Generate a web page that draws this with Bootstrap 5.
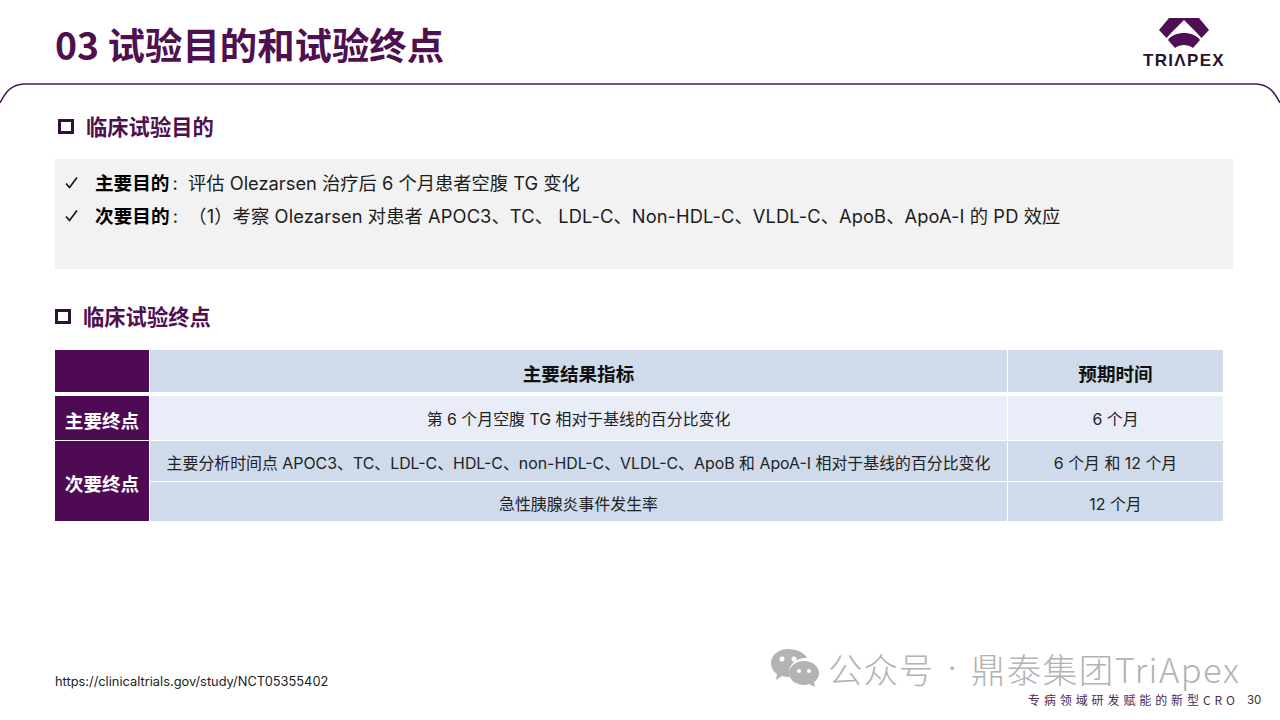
<!doctype html>
<html lang="zh"><head><meta charset="utf-8"><title>试验目的和试验终点</title>
<link href="https://cdn.jsdelivr.net/npm/bootstrap@5.3.0/dist/css/bootstrap.min.css" rel="stylesheet">
<style>
html,body{margin:0;height:720px;overflow:hidden;background:#fff}
body{font-family:Inter,"Noto Sans CJK SC",sans-serif;color:#1c1c1c}
.slide{position:relative;width:1280px;height:720px}
.top-head{height:83px;padding:0 55px 0 55px}
.page-title{font-size:37.4px;font-weight:700;color:#4f1050;line-height:1;margin:0;padding-top:26px;height:83px;font-family:"Noto Sans CJK SC",sans-serif;letter-spacing:0}
.logo-box{width:84px;margin-right:-1px;padding-top:18px;text-align:center}
.logo-text{font-family:"Liberation Sans",sans-serif;font-weight:700;font-size:17px;letter-spacing:1.3px;color:#2a1230;line-height:1;margin-top:3px;white-space:nowrap}
.curve{display:block;width:1280px;height:21px}
.sec-head{font-size:21.3px;font-weight:700;color:#4f1050;line-height:24px;margin:0;font-family:"Noto Sans CJK SC",sans-serif}
.sq{width:16px;height:15px;border:3px solid #2f1238;flex:none}
.sec-one{padding:10px 0 0 58px;gap:12px}
.goal-box{margin:21px 47px 0 55px;height:110px;background:#f2f2f2;padding:7px 0 0 10px;font-size:18.3px;line-height:32px;white-space:nowrap}
.goal-box b{font-weight:700;font-size:18.6px;color:#000;font-family:"Noto Sans CJK SC",sans-serif}
.colon{display:inline-block;width:18.6px;padding-left:3px}
.wide-line{letter-spacing:.09px}
.tick{width:30px;flex:none;display:flex;align-items:center}
.sec-two{padding:35px 0 0 55px;gap:12px}
.grid-tb{margin:22px 0 0 55px;display:grid;grid-template-columns:94px 857px 215px;grid-template-rows:42px 48px 41px 40px;column-gap:1px;width:1168px;font-size:15.9px;text-align:center;color:#222}
.cl{display:flex;align-items:center;justify-content:center;background:#cfdbea;white-space:nowrap;padding-top:4px}
.cl.hd{font-size:18.6px;font-weight:700;color:#111;font-family:"Noto Sans CJK SC",sans-serif}
.cl.pale{background:#e8edf7}
.cl.pu{background:#4e0a52;color:#fff;font-weight:700;font-size:18.6px;font-family:"Noto Sans CJK SC",sans-serif}
.r2{margin-top:4px}
.r3{margin-top:1px;padding-top:6px}
.sp{grid-row:span 2;margin-top:1px}
.src{position:absolute;left:55px;top:673px;font-size:12.85px;line-height:18px;color:#222}
.wm{position:absolute;left:771px;top:647px;color:#b3b3b3;font-size:34.5px;font-weight:300;line-height:42px;gap:13px;white-space:nowrap;letter-spacing:.9px;font-family:"Noto Sans CJK SC",sans-serif}
.wm-icon{margin-right:-4px}
.wm-dot{font-family:Inter,sans-serif}
.wm-name{letter-spacing:1.5px}
.tag{position:absolute;left:1028px;top:692px;font-size:12px;line-height:16px;letter-spacing:3.9px;color:#4a2a50;white-space:nowrap;font-family:"Noto Sans CJK SC",sans-serif}
.pg{position:absolute;left:1247px;top:692px;font-size:11.5px;line-height:16px;color:#333}
</style></head>
<body><div class="slide">
<div class="top-head d-flex justify-content-between">
  <h1 class="page-title">03 试验目的和试验终点</h1>
  <div class="logo-box">
    <svg width="50" height="31" viewBox="0 0 50 31" class="d-block mx-auto"><path fill="#4e0f55" d="M10 0H40L50 12 42.500 20 37 14 25 2 13 14 7.500 20 0 12Z"/><path fill="#4e0f55" d="M9 22C15 12.700 35 12.700 41 22L34 30C29 26 21 26 16 30Z"/></svg>
    <div class="logo-text">TRIΛPEX</div>
  </div>
</div>
<svg class="curve" viewBox="0 0 1280 21"><path d="M0 20C6 8 12 1.500 24 1H1256C1268 1.500 1274 8 1280 20" fill="none" stroke="#4e1a58" stroke-width="1.500"/></svg>
<div class="d-flex align-items-center sec-one"><span class="sq"></span><h2 class="sec-head">临床试验目的</h2></div>
<div class="goal-box">
  <div class="d-flex"><span class="tick"><svg width="13" height="13" viewBox="0 0 13 13"><path d="M1 7.500 4.500 11.500 12 1.500" fill="none" stroke="#111" stroke-width="1.600"/></svg></span><span><b>主要目的</b><span class="colon">:</span>评估 Olezarsen 治疗后 6 个月患者空腹 TG 变化</span></div>
  <div class="d-flex"><span class="tick"><svg width="13" height="13" viewBox="0 0 13 13"><path d="M1 7.500 4.500 11.500 12 1.500" fill="none" stroke="#111" stroke-width="1.600"/></svg></span><span class="wide-line"><b>次要目的</b><span class="colon">:</span>（1）考察 Olezarsen 对患者 APOC3、TC、 LDL-C、Non-HDL-C、VLDL-C、ApoB、ApoA-I 的 PD 效应</span></div>
</div>
<div class="d-flex align-items-center sec-two"><span class="sq"></span><h2 class="sec-head">临床试验终点</h2></div>
<div class="grid-tb">
  <div class="cl pu"></div><div class="cl hd">主要结果指标</div><div class="cl hd">预期时间</div>
  <div class="cl pu r2">主要终点</div><div class="cl pale r2">第 6 个月空腹 TG 相对于基线的百分比变化</div><div class="cl pale r2">6 个月</div>
  <div class="cl pu sp">次要终点</div><div class="cl r3">主要分析时间点 APOC3、TC、LDL-C、HDL-C、non-HDL-C、VLDL-C、ApoB 和 ApoA-I 相对于基线的百分比变化</div><div class="cl r3">6 个月 和 12 个月</div>
  <div class="cl r3">急性胰腺炎事件发生率</div><div class="cl r3">12 个月</div>
</div>
<div class="src">https://clinicaltrials.gov/study/NCT05355402</div>
<div class="wm d-flex align-items-center">
  <svg class="wm-icon" width="48" height="40" viewBox="0 0 48 40"><path fill="#b3b3b3" d="M17 1C8 1 0 7 0 15c0 5 3 9 6 11l-1 6 6-4c2 .6 4 1 6 1h2c-1-2-1-3-1-5 0-8 8-14 17-14h1C34 5 26 1 17 1Z"/><path fill="#b3b3b3" d="M33 13c-8 0-15 5-15 12s7 12 15 12c2 0 3 0 5-1l6 3-1-5c3-2 5-5 5-9 0-7-7-12-15-12Z"/><circle cx="11" cy="11" r="2.500" fill="#fff"/><circle cx="23" cy="11" r="2.500" fill="#fff"/><circle cx="28" cy="23" r="2" fill="#fff"/><circle cx="38" cy="23" r="2" fill="#fff"/></svg>
  <span>公众号</span><span class="wm-dot">·</span><span class="wm-name">鼎泰集团TriApex</span>
</div>
<div class="tag">专病领域研发赋能的新型CRO</div>
<div class="pg">30</div>
</div>
<script src="https://cdn.jsdelivr.net/npm/bootstrap@5.3.0/dist/js/bootstrap.bundle.min.js"></script>
</body></html>
